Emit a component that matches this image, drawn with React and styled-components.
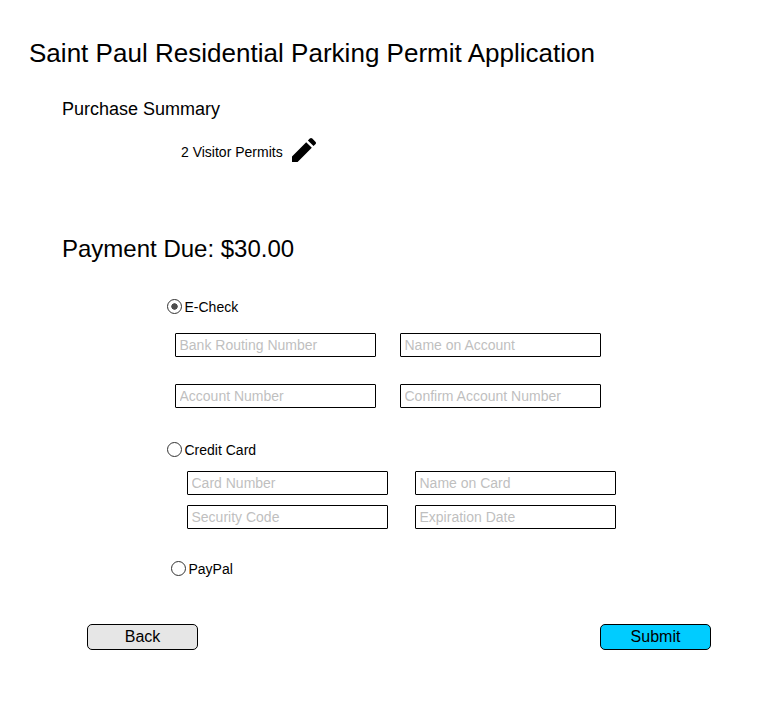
import React from "react";
import styled, { createGlobalStyle } from "styled-components";

const GlobalStyle = createGlobalStyle`
  * { box-sizing: border-box; }
  body { margin: 0; background: #fff; color: #000; font-family: "Liberation Sans", Arial, sans-serif; }
`;

const Page = styled.main`
  width: 775px;
  height: 703px;
  padding: 38px 64px 0 29px;
  display: flex;
  flex-direction: column;
`;
const Title = styled.h1`
  margin: 0;
  font-size: 26px;
  line-height: 30px;
  font-weight: 400;
  letter-spacing: 0.02px;
  white-space: nowrap;
`;
const Subtitle = styled.h2`
  margin: 31px 0 0 33px;
  font-size: 18px;
  line-height: 20px;
  font-weight: 400;
`;
const SummaryItem = styled.div`
  margin: 17px 0 0 152px;
  height: 28px;
  display: flex;
  align-items: center;
  gap: 9px;
  font-size: 14px;
`;
const SummaryText = styled.span`
  padding-top: 4px;
`;
const EditButton = styled.button`
  display: flex;
  padding: 0;
  border: 0;
  background: none;
`;
const PaymentDue = styled.h2`
  margin: 71px 0 0 33px;
  font-size: 24px;
  line-height: 28px;
  font-weight: 400;
`;
const Option = styled.label`
  display: flex;
  align-items: flex-start;
  gap: 2.5px;
  height: 16px;
  margin: ${(p) => p.$top}px 0 0 ${(p) => p.$left}px;
  font-size: 14px;
  line-height: 16px;
`;
const Radio = styled.input`
  appearance: none;
  display: block;
  width: 15px;
  height: 15px;
  margin: 0;
  border: 1px solid #333;
  border-radius: 50%;
  background: #fff;
  &:checked { background: radial-gradient(circle, #4d4d4d 2.9px, transparent 3.5px); }
`;
const Fields = styled.div`
  display: grid;
  grid-template-columns: 201px 201px;
  column-gap: ${(p) => p.$columnGap}px;
  row-gap: ${(p) => p.$rowGap}px;
  margin: ${(p) => p.$top}px 0 0 ${(p) => p.$left}px;
`;
const Field = styled.input`
  width: 201px;
  height: 24px;
  padding: 0 3.5px;
  border: 1px solid #000;
  border-radius: 1px;
  background: #fff;
  font: 14px "Liberation Sans", Arial, sans-serif;
  outline: none;
  &::placeholder { color: #bfbfbf; opacity: 1; }
`;
const Actions = styled.div`
  display: flex;
  justify-content: space-between;
  margin: 47px 0 0 58px;
`;
const Button = styled.button`
  width: 111px;
  height: 26px;
  padding: 0;
  border: 1px solid #000;
  border-radius: 5px;
  color: #000;
  background: ${(p) => (p.$primary ? "#00ccff" : "#e6e6e6")};
  font: 16px/24px "Liberation Sans", Arial, sans-serif;
`;

export default function App() {
  return (
    <Page>
      <GlobalStyle />
      <Title>Saint Paul Residential Parking Permit Application</Title>
      <Subtitle>Purchase Summary</Subtitle>
      <SummaryItem>
        <SummaryText>2 Visitor Permits</SummaryText>
        <EditButton aria-label="Edit">
          <svg width="24" height="24" viewBox="0 0 24 24">
            <path d="M0 18.4V24H5.6L19.8 9.8L14.2 4.2ZM23.4 6.2C24.2 5.4 24.2 4.5 23.4 3.7L20.3 .6C19.5-.2 18.6-.2 17.8.6L15.9 2.5L21.5 8.1Z" />
          </svg>
        </EditButton>
      </SummaryItem>
      <PaymentDue>Payment Due: $30.00</PaymentDue>
      <Option $top={36} $left={138}>
        <Radio type="radio" name="method" defaultChecked />
        E-Check
      </Option>
      <Fields $top={18} $left={146} $columnGap={24} $rowGap={27}>
        <Field placeholder="Bank Routing Number" />
        <Field placeholder="Name on Account" />
        <Field placeholder="Account Number" />
        <Field placeholder="Confirm Account Number" />
      </Fields>
      <Option $top={34} $left={138}>
        <Radio type="radio" name="method" />
        Credit Card
      </Option>
      <Fields $top={13} $left={158} $columnGap={27} $rowGap={10}>
        <Field placeholder="Card Number" />
        <Field placeholder="Name on Card" />
        <Field placeholder="Security Code" />
        <Field placeholder="Expiration Date" />
      </Fields>
      <Option $top={32} $left={142}>
        <Radio type="radio" name="method" />
        PayPal
      </Option>
      <Actions>
        <Button type="button">Back</Button>
        <Button type="button" $primary>Submit</Button>
      </Actions>
    </Page>
  );
}
